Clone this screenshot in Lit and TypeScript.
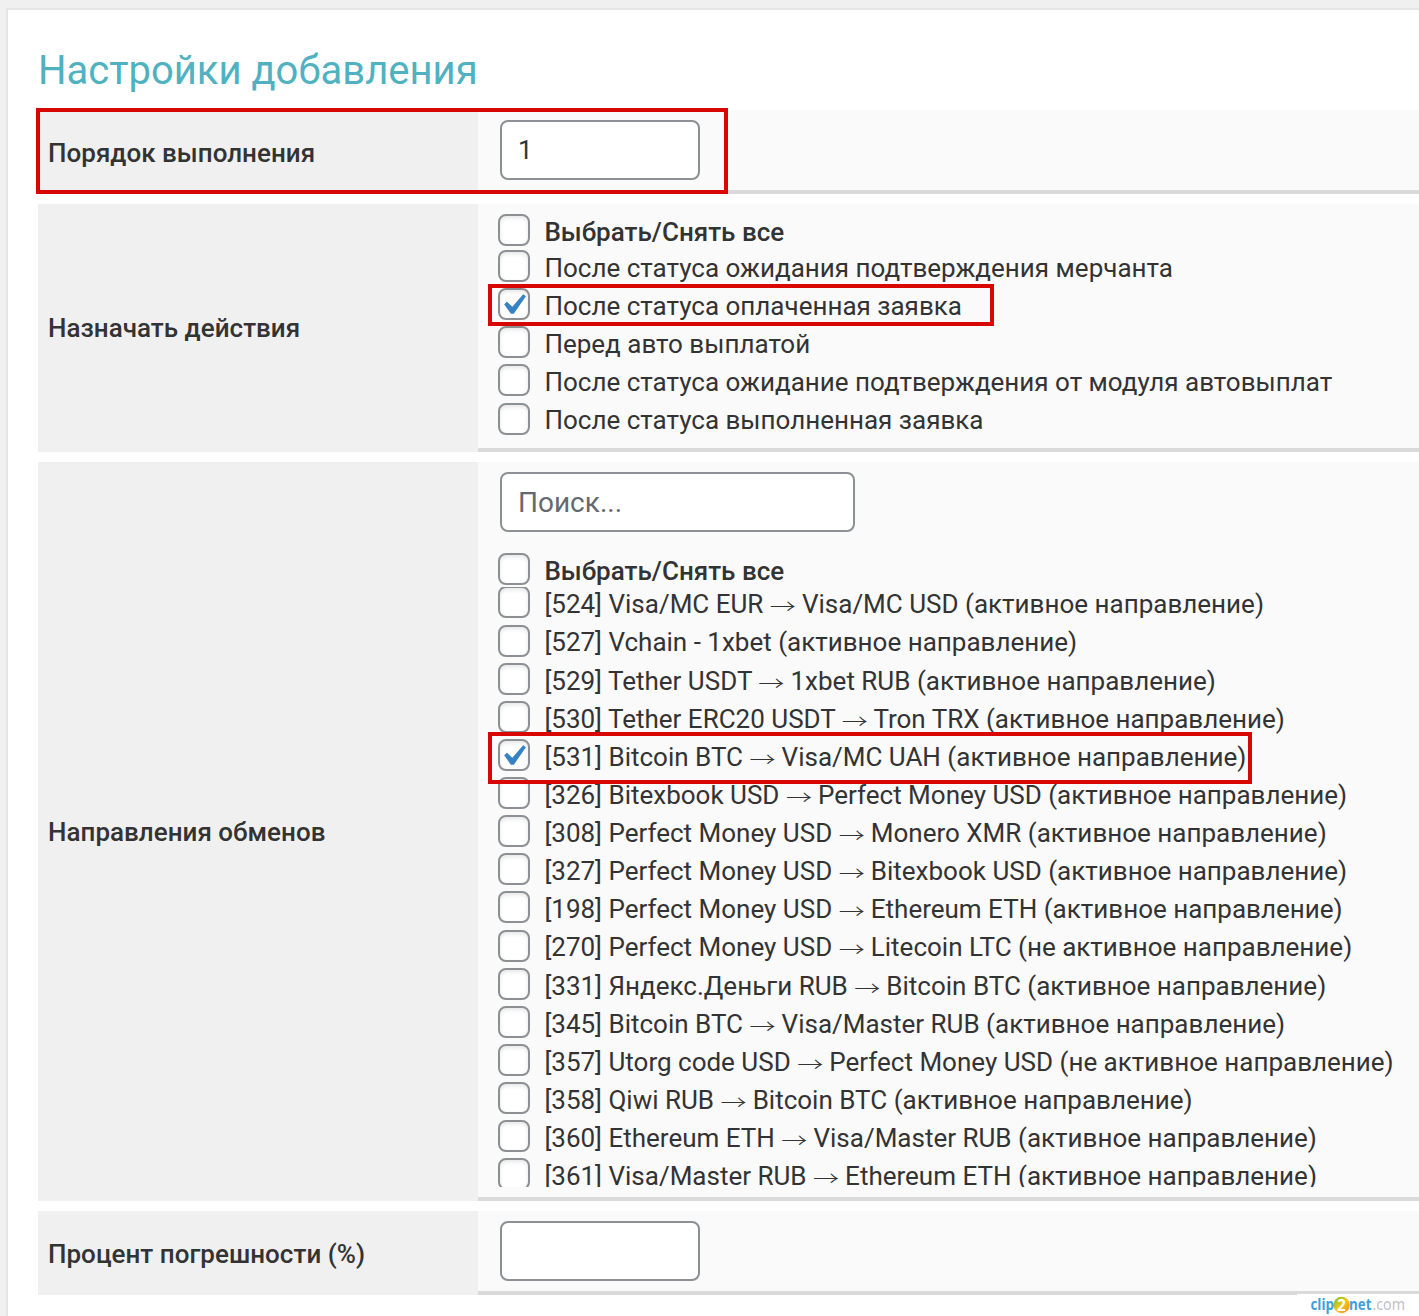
import { LitElement, html, css } from "lit";
import { customElement, property } from "lit/decorators.js";
import { classMap } from "lit/directives/class-map.js";

interface Item {
  text: string;
  checked?: boolean;
  bold?: boolean;
}

const ACTIONS: Item[] = [
  { text: "После статуса ожидания подтверждения мерчанта" },
  { text: "После статуса оплаченная заявка", checked: true },
  { text: "Перед авто выплатой" },
  { text: "После статуса ожидание подтверждения от модуля автовыплат" },
  { text: "После статуса выполненная заявка" },
];

const DIRECTIONS: Item[] = [
  { text: "[524] Visa/MC EUR → Visa/MC USD (активное направление)" },
  { text: "[527] Vchain - 1xbet (активное направление)" },
  { text: "[529] Tether USDT → 1xbet RUB (активное направление)" },
  { text: "[530] Tether ERC20 USDT → Tron TRX (активное направление)" },
  { text: "[531] Bitcoin BTC → Visa/MC UAH (активное направление)", checked: true },
  { text: "[326] Bitexbook USD → Perfect Money USD (активное направление)" },
  { text: "[308] Perfect Money USD → Monero XMR (активное направление)" },
  { text: "[327] Perfect Money USD → Bitexbook USD (активное направление)" },
  { text: "[198] Perfect Money USD → Ethereum ETH (активное направление)" },
  { text: "[270] Perfect Money USD → Litecoin LTC (не активное направление)" },
  { text: "[331] Яндекс.Деньги RUB → Bitcoin BTC (активное направление)" },
  { text: "[345] Bitcoin BTC → Visa/Master RUB (активное направление)" },
  { text: "[357] Utorg code USD → Perfect Money USD (не активное направление)" },
  { text: "[358] Qiwi RUB → Bitcoin BTC (активное направление)" },
  { text: "[360] Ethereum ETH → Visa/Master RUB (активное направление)" },
  { text: "[361] Visa/Master RUB → Ethereum ETH (активное направление)" },
];

@customElement("check-item")
export class CheckItem extends LitElement {
  @property({ attribute: false }) item: Item = { text: "" };

  static styles = css`
    :host {
      display: block;
    }
    .line {
      display: flex;
      align-items: flex-start;
      gap: 14.4px;
      height: 38.13px;
    }
    .box {
      flex: none;
      box-sizing: border-box;
      width: 32px;
      height: 32px;
      border: 2px solid #8c8f94;
      border-radius: 8px;
      background: #fff;
      box-shadow: inset 0 2px 4px rgba(0, 0, 0, 0.1);
    }
    .box svg {
      display: block;
      width: 42px;
      height: 42px;
      margin: -6px 0 0 -8px;
    }
    .text {
      margin-top: -0.1px;
      white-space: nowrap;
      line-height: 36px;
    }
    .bold {
      font-weight: 500;
    }
    .arrow {
      display: inline-block;
      width: 25.7px;
      text-align: center;
      line-height: 30px;
      font-family: "Noto Sans CJK JP", sans-serif;
      font-weight: 300;
      transform: translateY(3px) scaleY(0.78);
      transform-origin: 50% 54%;
    }
  `;

  render() {
    const parts = this.item.text.split("→");
    return html`<label class="line">
      <span class="box">${this.item.checked
        ? html`<svg viewBox="0 0 20 20"><path d="M14.83 4.89l1.34.94-5.81 8.38H9.02L5.78 9.67l1.34-1.25 2.57 2.4z" fill="#3582c4" /></svg>`
        : null}</span>
      <span class=${classMap({ text: true, bold: !!this.item.bold })}>${parts[0]}${parts.length > 1
        ? html`<span class="arrow">→</span>${parts[1]}`
        : null}</span>
    </label>`;
  }
}

@customElement("app-root")
export class AppRoot extends LitElement {
  static styles = css`
    :host {
      display: block;
      position: relative;
      box-sizing: border-box;
      height: 1316px;
      padding: 8px 0 0 6px;
      overflow: hidden;
      background: #f0f0f0;
      color: #333;
      font: 26px/36px Roboto, sans-serif;
    }
    .panel {
      box-sizing: border-box;
      height: 1308px;
      padding: 35px 0 0 30px;
      border: 2px solid #e5e5e5;
      border-width: 2px 0 0 2px;
      background: #fff;
    }
    .title {
      margin: 0;
      height: 65px;
      font-size: 40px;
      line-height: 52px;
      font-weight: 400;
      color: #50b1c0;
    }
    .rows {
      display: flex;
      flex-direction: column;
      gap: 10px;
    }
    .row {
      display: grid;
      grid-template-columns: 440px 1fr;
    }
    .short {
      height: 84px;
    }
    .short .name {
      padding-top: 2px;
    }
    .actions {
      height: 248px;
    }
    .dirs {
      height: 739px;
    }
    .name {
      display: flex;
      align-items: center;
      padding-left: 10px;
      background: #f0f0f0;
      font-weight: 500;
      letter-spacing: 0.02px;
    }
    .value {
      min-width: 0;
      box-sizing: border-box;
      padding: 10px 0 0 20px;
      border-bottom: 4px solid #dadada;
      background: #fafafa;
    }
    .field {
      display: block;
      box-sizing: border-box;
      width: 200px;
      height: 60px;
      margin: 0 0 0 2px;
      padding: 0 16px;
      border: 2px solid #8c8f94;
      border-radius: 8px;
      background: #fff;
      color: #2c3338;
      font: 26px/56px Roboto, sans-serif;
    }
    .search {
      width: 355px;
      font-size: 28px;
    }
    .field::placeholder {
      color: #646970;
      opacity: 1;
    }
    .all {
      height: 36px;
    }
    .dirs .all {
      height: 34px;
      margin-top: 21px;
    }
    .list {
      height: 600px;
      overflow: hidden;
    }
    .list check-item:first-child {
      margin-top: -0.6px;
    }
    .mark {
      position: absolute;
      box-sizing: border-box;
      border: 4px solid #d90606;
    }
    .m1 {
      left: 36px;
      top: 108px;
      width: 692px;
      height: 86px;
    }
    .m2 {
      left: 488px;
      top: 284px;
      width: 506px;
      height: 42px;
    }
    .m3 {
      left: 488px;
      top: 732px;
      width: 764px;
      height: 52px;
    }
    .brand {
      position: absolute;
      right: 0;
      bottom: 0;
      width: 122px;
      height: 22px;
      background: #fff;
    }
    .brand svg {
      display: block;
    }
    .brand text {
      font-family: "Open Sans", sans-serif;
    }
  `;

  private all: Item = { text: "Выбрать/Снять все", bold: true };

  render() {
    return html`
      <main class="panel">
        <h1 class="title">Настройки добавления</h1>
        <div class="rows">
          <section class="row short">
            <div class="name">Порядок выполнения</div>
            <div class="value"><input class="field" type="text" .value=${"1"} /></div>
          </section>
          <section class="row actions">
            <div class="name">Назначать действия</div>
            <div class="value">
              <check-item class="all" .item=${this.all}></check-item>
              ${ACTIONS.map((i) => html`<check-item .item=${i}></check-item>`)}
            </div>
          </section>
          <section class="row dirs">
            <div class="name">Направления обменов</div>
            <div class="value">
              <input class="field search" type="text" placeholder="Поиск..." />
              <check-item class="all" .item=${this.all}></check-item>
              <div class="list">
                ${DIRECTIONS.map((i) => html`<check-item .item=${i}></check-item>`)}
              </div>
            </div>
          </section>
          <section class="row short">
            <div class="name">Процент погрешности (%)</div>
            <div class="value"><input class="field" type="text" /></div>
          </section>
        </div>
      </main>
      <div class="mark m1"></div>
      <div class="mark m2"></div>
      <div class="mark m3"></div>
      <div class="brand">
        <svg width="122" height="22" viewBox="0 0 122 22">
          <defs>
            <linearGradient id="ball" x1="0" y1="0" x2="1" y2="1">
              <stop offset="0" stop-color="#6cc02a" />
              <stop offset="0.5" stop-color="#f0c818" />
              <stop offset="1" stop-color="#f58a1c" />
            </linearGradient>
          </defs>
          <circle cx="44.6" cy="11" r="8.3" fill="url(#ball)" />
          <g font-size="15.5">
            <text x="13.5" y="16" textLength="23.5" lengthAdjust="spacingAndGlyphs" fill="#3f9fdc" font-weight="700">clip</text>
            <text x="40" y="16.5" fill="#fff" font-weight="700">2</text>
            <text x="52" y="16" textLength="22.5" lengthAdjust="spacingAndGlyphs" fill="#3f9fdc" font-weight="700">net</text>
            <text x="75.5" y="16" textLength="32.5" lengthAdjust="spacingAndGlyphs" fill="#bcbcc8">.com</text>
          </g>
        </svg>
      </div>
    `;
  }
}
